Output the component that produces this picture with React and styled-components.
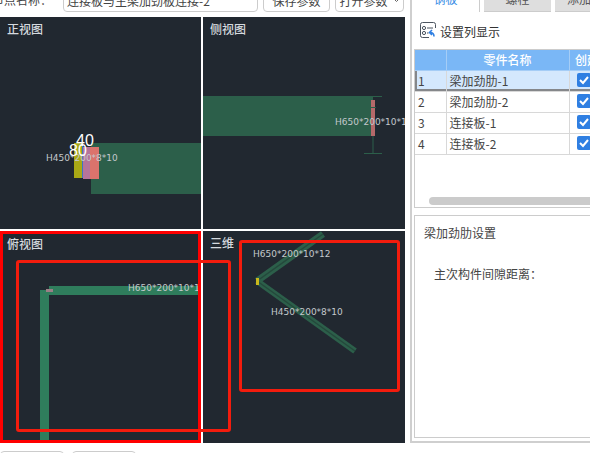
import React from "react";
import styled, { createGlobalStyle } from "styled-components";

const Global = createGlobalStyle`
  html, body { margin: 0; padding: 0; background: #fff; }
  body { width: 590px; height: 453px; overflow: hidden; font: 12px "Noto Sans CJK SC", "Liberation Sans", sans-serif; color: #444; }
  * { box-sizing: border-box; }
`;

const Page = styled.div`
  position: relative;
  width: 590px;
  height: 453px;
  overflow: hidden;
`;
const Body = styled.div`
  display: flex;
  height: 443px;
`;
const LeftColumn = styled.div`
  flex: none;
  width: 405px;
  display: flex;
  flex-direction: column;
  gap: 5px;
`;
const TopRow = styled.div`
  flex: none;
  height: 12px;
  overflow: hidden;
  display: flex;
  align-items: flex-end;
`;
const FieldLabel = styled.span`
  flex: none;
  width: 63px;
  margin-left: -8px;
  margin-right: 8px;
  height: 24px;
  line-height: 24px;
  white-space: nowrap;
`;
const TextField = styled.div`
  flex: none;
  width: 195px;
  height: 24px;
  border: 1px solid #ccc;
  border-radius: 4px;
  padding-left: 3px;
  line-height: 24px;
  white-space: nowrap;
  overflow: hidden;
`;
const ActionButton = styled.div`
  flex: none;
  width: ${(p) => p.$w}px;
  margin-left: 5px;
  height: 24px;
  border: 1px solid #ccc;
  border-radius: 4px;
  display: flex;
  align-items: center;
  justify-content: center;
  gap: 5px;
  white-space: nowrap;
`;
const Views = styled.div`
  flex: none;
  height: 426px;
  display: grid;
  grid-template-columns: 201px 202px;
  grid-template-rows: 212px 212px;
  gap: 2px;
`;
const Pane = styled.div`
  position: relative;
  background: #212830;
  overflow: hidden;
`;
const PaneLabel = styled.span`
  position: absolute;
  left: ${(p) => p.$x || 7}px;
  top: ${(p) => p.$y || 3}px;
  line-height: 18px;
  color: #d5dadf;
  font-weight: 500;
`;
const Drawing = styled.svg`
  display: block;
  width: 100%;
  height: 100%;
`;
const Dim = styled.text`
  font: 9px "DejaVu Sans", sans-serif;
  fill: #c4c8cc;
`;
const Size = styled.text`
  font: 16px "Liberation Sans", sans-serif;
  fill: #fff;
`;
const Side = styled.div`
  flex: none;
  margin-left: 5px;
  width: 180px;
  height: 443px;
  border-left: 2px solid #cfcfcf;
  border-bottom: 2px solid #cfcfcf;
  display: flex;
  flex-direction: column;
`;
const Tabs = styled.div`
  flex: none;
  display: flex;
  height: 12px;
  overflow: hidden;
  align-items: flex-end;
`;
const Tab = styled.div`
  flex: none;
  height: 24px;
  line-height: 22px;
  text-align: center;
  white-space: nowrap;
  width: ${(p) => p.$w}px;
  margin-right: ${(p) => p.$gap || 0}px;
  background: ${(p) => (p.$active ? "#fff" : "#dedede")};
  color: ${(p) => (p.$active ? "#3a8ee6" : "#555")};
  border-right: ${(p) => (p.$active ? "1px solid #ccc" : "none")};
  border-bottom: ${(p) => (p.$active ? "none" : "1px solid #ccc")};
`;
const ColumnTool = styled.div`
  flex: none;
  height: 37px;
  display: flex;
  align-items: center;
  padding: 2px 0 0 8px;
  gap: 4px;
  color: #333;
`;
const ToolIcon = styled.svg`
  flex: none;
  margin-top: -3px;
`;
const TableFrame = styled.div`
  flex: none;
  position: relative;
  margin-left: 2px;
  width: 178px;
  height: 159px;
  border: 1px solid #ccc;
  border-right: none;
  overflow: hidden;
`;
const Grid = styled.table`
  border-collapse: collapse;
  table-layout: fixed;
  width: 190px;
`;
const HeadCell = styled.th`
  height: 20px;
  padding: 0;
  background: #7ab7f6;
  color: #fff;
  font-weight: 500;
  border: 1px solid #a5cdf6;
  border-width: 0 1px 1px 0;
  white-space: nowrap;
  overflow: hidden;
`;
const Row = styled.tr`
  height: 21px;
  background: ${(p) => (p.$selected ? "#d4e8fd" : "#fff")};
  box-shadow: ${(p) => (p.$selected ? "inset 0 -2px 0 #85878a, inset 2px 0 0 #85878a" : "none")};
`;
const Cell = styled.td`
  padding: 0 0 1px ${(p) => p.$pad}px;
  border: 1px solid #d8d8d8;
  border-width: 0 1px 1px 0;
  color: #444;
  white-space: nowrap;
  overflow: hidden;
`;
const Check = styled.span`
  display: block;
  width: 14px;
  height: 14px;
  margin-left: 7px;
  border-radius: 2px;
  background: #2f7fe2;
`;
const HScroll = styled.div`
  position: absolute;
  left: 14px;
  right: -4px;
  bottom: 2px;
  height: 8px;
  border-radius: 4px;
  background: #cbcbcb;
`;
const Settings = styled.div`
  flex: none;
  margin: 7px 0 0 2px;
  width: 178px;
  height: 223px;
  border: 1px solid #ccc;
  border-right: none;
  padding: 8px 0 0 9px;
  color: #444;
`;
const SettingsTitle = styled.div`
  line-height: 18px;
`;
const SettingsField = styled.div`
  margin: 23px 0 0 10px;
  line-height: 18px;
`;
const Footer = styled.div`
  display: flex;
  gap: 8px;
  margin-top: 8px;
`;
const FooterButton = styled.div`
  flex: none;
  width: 64px;
  height: 24px;
  border: 1px solid #ccc;
  border-radius: 4px;
`;
const Mark = styled.div`
  position: absolute;
  left: ${(p) => p.$x}px;
  top: ${(p) => p.$y}px;
  width: ${(p) => p.$w}px;
  height: ${(p) => p.$h}px;
  border: ${(p) => p.$b}px solid ${(p) => p.$c};
  border-radius: ${(p) => p.$r}px;
  pointer-events: none;
`;

const rows = ["梁加劲肋-1", "梁加劲肋-2", "连接板-1", "连接板-2"];

const ColumnIcon = () => (
  <ToolIcon width="16" height="16" viewBox="0 0 16 16" fill="none">
    <path d="M9 15.5H2.5a2 2 0 0 1-2-2V2.500a2 2 0 0 1 2-2h11a2 2 0 0 1 2 2V6" stroke="#4c5560" />
    <circle cx="4" cy="6" r="1.6" stroke="#4c5560" />
    <circle cx="4" cy="11" r="1.6" stroke="#4c5560" />
    <path d="M7 6h6M7 11h1.5" stroke="#4c5560" />
    <path d="M14 14.500c0-3-1.500-4-4-4M12 8l-2.500 2.500L12 13" stroke="#2f7fe2" strokeWidth="1.6" />
  </ToolIcon>
);

export default function App() {
  return (
    <Page>
      <Global />
      <Body>
        <LeftColumn>
          <TopRow>
            <FieldLabel>节点名称：</FieldLabel>
            <TextField>连接板与主梁加劲板连接-2</TextField>
            <ActionButton $w={67}>保存参数</ActionButton>
            <ActionButton $w={69}>
              打开参数
              <svg width="7" height="5" viewBox="0 0 7 5" fill="none">
                <path d="M1 1l2.500 2.500L6 1" stroke="#666" />
              </svg>
            </ActionButton>
          </TopRow>
          <Views>
            <Pane>
              <Drawing viewBox="0 0 201 212">
                <rect x="91" y="126" width="110" height="51" fill="#2c5f4a" />
                <rect x="74" y="126" width="8" height="35" fill="#a8a815" />
                <rect x="82" y="127" width="1.5" height="34" fill="#3a76c4" />
                <rect x="83" y="130" width="7" height="32" fill="#b5749a" />
                <rect x="90" y="130" width="9" height="32" fill="#db736c" />
                <Dim x="46" y="144">H450*200*8*10</Dim>
                <Size x="76" y="129">40</Size>
                <Size x="69" y="139">80</Size>
              </Drawing>
              <PaneLabel>正视图</PaneLabel>
            </Pane>
            <Pane>
              <Drawing viewBox="0 0 202 212">
                <rect x="0" y="79" width="170" height="40" fill="#2c5f4a" />
                <rect x="168" y="83" width="4" height="36" fill="#b5696a" />
                <path d="M161 79.500h18M161 136.500h18M170 119v17M166 90.500h7" stroke="#2c5f4a" />
                <Dim x="132" y="108">H650*200*10*12</Dim>
              </Drawing>
              <PaneLabel>侧视图</PaneLabel>
            </Pane>
            <Pane>
              <Drawing viewBox="0 0 201 212">
                <rect x="49" y="55" width="149" height="9" fill="#2f7d5c" />
                <rect x="40" y="59" width="9" height="150" fill="#2f7d5c" />
                <rect x="46" y="58" width="7" height="3" fill="#9a7f86" />
                <Dim x="128" y="60">H650*200*10*12</Dim>
              </Drawing>
              <PaneLabel $y={4}>俯视图</PaneLabel>
            </Pane>
            <Pane>
              <Drawing viewBox="0 0 202 212">
                <path d="M54 50L120 3" stroke="#2c5f4a" strokeWidth="7" />
                <path d="M54 50L120 3" stroke="#24493c" strokeWidth="1.500" />
                <path d="M54 50L152 120" stroke="#2c5f4a" strokeWidth="6" />
                <path d="M54 50L152 120" stroke="#24493c" strokeWidth="1.500" />
                <rect x="53" y="47" width="3" height="7" fill="#c9b81c" />
                <Dim x="50" y="26">H650*200*10*12</Dim>
                <Dim x="68" y="84">H450*200*8*10</Dim>
              </Drawing>
              <PaneLabel>三维</PaneLabel>
            </Pane>
          </Views>
        </LeftColumn>
        <Side>
          <Tabs>
            <Tab $active $w={68} $gap={4}>钢板</Tab>
            <Tab $w={67} $gap={4}>螺栓</Tab>
            <Tab $w={60}>添加板</Tab>
          </Tabs>
          <ColumnTool>
            <ColumnIcon />
            设置列显示
          </ColumnTool>
          <TableFrame>
            <Grid>
              <colgroup>
                <col width="31" />
                <col width="123" />
                <col width="36" />
              </colgroup>
              <thead>
                <tr>
                  <HeadCell />
                  <HeadCell>零件名称</HeadCell>
                  <HeadCell>创建</HeadCell>
                </tr>
              </thead>
              <tbody>
                {rows.map((name, i) => (
                  <Row key={name} $selected={i === 0}>
                    <Cell $pad={3}>{i + 1}</Cell>
                    <Cell $pad={3}>{name}</Cell>
                    <Cell $pad={0}>
                      <Check>
                        <svg width="14" height="14" viewBox="0 0 14 14" fill="none">
                          <path d="M3 7l3 3 5-6" stroke="#fff" strokeWidth="2" />
                        </svg>
                      </Check>
                    </Cell>
                  </Row>
                ))}
              </tbody>
            </Grid>
            <HScroll />
          </TableFrame>
          <Settings>
            <SettingsTitle>梁加劲肋设置</SettingsTitle>
            <SettingsField>主次构件间隙距离：</SettingsField>
          </Settings>
        </Side>
      </Body>
      <Footer>
        <FooterButton />
        <FooterButton />
      </Footer>
      <Mark $x={0} $y={231} $w={201} $h={212} $b={3} $c="#ff0000" $r={0} />
      <Mark $x={16} $y={260} $w={215} $h={172} $b={3} $c="#f31c0d" $r={3} />
      <Mark $x={239} $y={240} $w={161} $h={152} $b={3} $c="#f31c0d" $r={3} />
    </Page>
  );
}
